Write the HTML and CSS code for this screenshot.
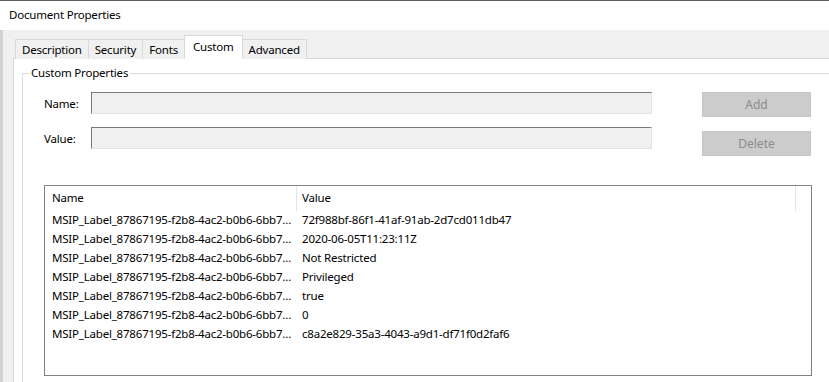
FILE: index.html
```html
<!DOCTYPE html>
<html>
  <head>
    <title>Document Properties</title>
    <link rel="stylesheet" href="styles.css">
  </head>
  <body>
    <div class="window">
      <div class="titlebar">Document Properties</div>
      <div class="dialog">
        <div class="tabs">
          <div class="tab">Description</div>
          <div class="tab">Security</div>
          <div class="tab">Fonts</div>
          <div class="tab active">Custom</div>
          <div class="tab">Advanced</div>
        </div>
        <div class="panel">
          <fieldset class="group">
            <legend>Custom Properties</legend>
            <div class="editor">
              <div class="fields">
                <div class="field">
                  <label>Name:</label>
                  <input type="text" disabled />
                </div>
                <div class="field">
                  <label>Value:</label>
                  <input type="text" disabled />
                </div>
              </div>
              <div class="buttons">
                <button disabled>Add</button>
                <button disabled>Delete</button>
              </div>
            </div>
            <div class="list">
              <div class="row head">
                <div class="col-name">Name</div>
                <div class="col-value">Value</div>
              </div>
              <div class="row">
                <div class="col-name">MSIP_Label_87867195-f2b8-4ac2-b0b6-6bb7...</div>
                <div class="col-value">72f988bf-86f1-41af-91ab-2d7cd011db47</div>
              </div>
              <div class="row">
                <div class="col-name">MSIP_Label_87867195-f2b8-4ac2-b0b6-6bb7...</div>
                <div class="col-value">2020-06-05T11:23:11Z</div>
              </div>
              <div class="row">
                <div class="col-name">MSIP_Label_87867195-f2b8-4ac2-b0b6-6bb7...</div>
                <div class="col-value">Not Restricted</div>
              </div>
              <div class="row">
                <div class="col-name">MSIP_Label_87867195-f2b8-4ac2-b0b6-6bb7...</div>
                <div class="col-value">Privileged</div>
              </div>
              <div class="row">
                <div class="col-name">MSIP_Label_87867195-f2b8-4ac2-b0b6-6bb7...</div>
                <div class="col-value">true</div>
              </div>
              <div class="row">
                <div class="col-name">MSIP_Label_87867195-f2b8-4ac2-b0b6-6bb7...</div>
                <div class="col-value">0</div>
              </div>
              <div class="row">
                <div class="col-name">MSIP_Label_87867195-f2b8-4ac2-b0b6-6bb7...</div>
                <div class="col-value">c8a2e829-35a3-4043-a9d1-df71f0d2faf6</div>
              </div>
            </div>
          </fieldset>
        </div>
      </div>
    </div>
  </body>
</html>
```

FILE: styles.css
```css
body {
  margin: 0;
  font-family: "Noto Sans", "Open Sans", sans-serif;
  font-size: 11.5px;
  letter-spacing: -0.2px;
  color: #000;
  background: #fff;
}
.window {
  width: 829px;
  height: 382px;
  overflow: hidden;
  border-top: 1px solid #5f5f5f;
  box-sizing: border-box;
}
.titlebar {
  height: 29px;
  line-height: 28px;
  padding-left: 9px;
  background: #fff;
}
.dialog {
  height: 352px;
  background: #f0f0f0;
  border-left: 3px solid #d2d2d2;
  padding: 5px 0 0 10px;
  box-sizing: border-box;
}
.tabs {
  display: flex;
  align-items: flex-end;
  margin-left: 2px;
  margin-bottom: -1px;
  position: relative;
  z-index: 1;
}
.tab {
  height: 20px;
  line-height: 19px;
  padding: 0 6px;
  min-width: 34px;
  border: 1px solid #d9d9d9;
  border-bottom: none;
  margin-left: -1px;
  background: #f0f0f0;
  box-sizing: border-box;
}
.tab:first-child {
  margin-left: 0;
}
.tab.active {
  height: 24px;
  line-height: 21px;
  padding: 0 8px 2px 8px;
  background: #fff;
  position: relative;
  z-index: 2;
}
.panel {
  width: 900px;
  height: 400px;
  background: #fff;
  border: 1px solid #d9d9d9;
}
.group {
  margin: 6px 0 0 8px;
  padding: 0;
  width: 900px;
  min-height: 400px;
  border: 1px solid #dcdcdc;
}
.group legend {
  margin-left: 6px;
  padding: 0 2px;
  line-height: 16px;
}
.editor {
  display: flex;
  margin-top: 11px;
  padding-left: 21px;
}
.fields {
  display: flex;
  flex-direction: column;
  gap: 13px;
}
.field {
  display: flex;
  align-items: center;
}
.field label {
  width: 47px;
}
.field input {
  width: 561px;
  height: 22px;
  margin: 0;
  box-sizing: border-box;
  background: #f0f0f0;
  border: 1px solid;
  border-color: #7a7a7a #e3e3e3 #e3e3e3 #7a7a7a;
}
.buttons {
  display: flex;
  flex-direction: column;
  gap: 14px;
  margin-left: 50px;
}
.buttons button {
  width: 109px;
  height: 25px;
  margin: 0;
  font-family: inherit;
  font-size: 12px;
  letter-spacing: 0;
  color: #8c8c8c;
  background: #cccccc;
  border: 1px solid #c4c4c4;
}
.list {
  margin: 29px 0 0 21px;
  width: 768px;
  height: 191px;
  box-sizing: border-box;
  border: 1px solid #828282;
  background: #fff;
}
.row {
  display: flex;
  height: 19px;
  line-height: 18px;
  white-space: nowrap;
}
.row.head {
  height: 25px;
  line-height: 24px;
}
.col-name {
  width: 251px;
  padding-left: 7px;
  box-sizing: border-box;
}
.col-value {
  width: 499px;
  padding-left: 6px;
  box-sizing: border-box;
}
.head .col-name {
  width: 252px;
  border-right: 1px solid #e5e5e5;
}
.head .col-value {
  width: 499px;
  padding-left: 5px;
  border-right: 1px solid #e5e5e5;
}
```
